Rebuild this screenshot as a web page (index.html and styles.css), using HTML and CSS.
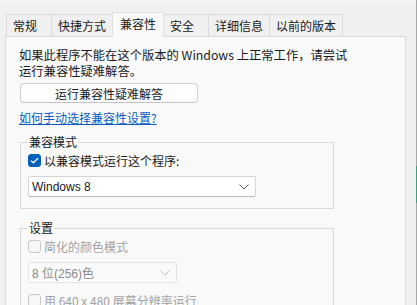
FILE: index.html
```html
<!DOCTYPE html>
<html lang="zh-CN">
  <head>
    <meta charset="UTF-8" />
    <title>属性 - 兼容性</title>
    <link rel="stylesheet" href="styles.css">
  </head>
  <body>
    <div class="window">
      <div class="tabs">
        <div class="tab">常规</div>
        <div class="tab">快捷方式</div>
        <div class="tab active">兼容性</div>
        <div class="tab">安全</div>
        <div class="tab">详细信息</div>
        <div class="tab">以前的版本</div>
      </div>
      <div class="panel">
        <p class="intro">如果此程序不能在这个版本的 Windows 上正常工作，请尝试<br>运行兼容性疑难解答。</p>
        <button class="btn">运行兼容性疑难解答</button>
        <a class="link" href="#">如何手动选择兼容性设置?</a>

        <fieldset class="group">
          <legend>兼容模式</legend>
          <label class="check">
            <span class="box checked">
              <svg width="9" height="7" viewBox="0 0 9 7"><path d="M1 3.6 L3.3 5.8 L8 1.2" fill="none" stroke="#fff" stroke-width="1.3"/></svg>
            </span>
            以兼容模式运行这个程序:
          </label>
          <div class="select">
            <span>Windows 8</span>
            <svg width="10" height="6" viewBox="0 0 10 6"><path d="M0.5 0.5 L5 5 L9.5 0.5" fill="none" stroke="#5c5c5c" stroke-width="1"/></svg>
          </div>
        </fieldset>

        <fieldset class="group settings">
          <legend>设置</legend>
          <label class="check disabled">
            <span class="box"></span>
            简化的颜色模式
          </label>
          <div class="select small disabled">
            <span>8 位(256)色</span>
            <svg width="10" height="6" viewBox="0 0 10 6"><path d="M0.5 0.5 L5 5 L9.5 0.5" fill="none" stroke="#c4c4c4" stroke-width="1"/></svg>
          </div>
          <label class="check disabled">
            <span class="box"></span>
            用 640 x 480 屏幕分辨率运行
          </label>
        </fieldset>
      </div>
    </div>
    <div class="edge">
      <div class="edge-mark"></div>
    </div>
  </body>
</html>
```
FILE: styles.css
```css
* {
  margin: 0;
  padding: 0;
  box-sizing: border-box;
}
html,
body {
  width: 417px;
  height: 305px;
  overflow: hidden;
}
body {
  display: flex;
  background-color: #f0f0f0;
  font-family: "Noto Sans CJK SC", "Liberation Sans", sans-serif;
  font-size: 12px;
  color: #1a1a1a;
}
.window {
  width: 416px;
  height: 305px;
  border-top: 3px solid #f4f4f4;
  padding: 0 10px 0 5px;
}
/* 右侧边缘 */
.edge {
  width: 1px;
  background-color: #a8a8a8;
}
.edge-mark {
  height: 37px;
  margin-top: 166px;
  background-color: #3aa27a;
}
/* 标签页 */
.tabs {
  display: flex;
  align-items: flex-end;
  height: 33px;
  padding-left: 1px;
}
.tab {
  min-width: 46px;
  height: 22px;
  padding: 0 6px;
  line-height: 21px;
  background-color: #f0f0f0;
  border: 1px solid #dadada;
  border-bottom: none;
  margin-right: -1px;
}
.tab.active {
  height: 25px;
  line-height: 22px;
  padding: 0 7px;
  background-color: #f9f9f9;
  border-color: #e0e0e0;
  position: relative;
  margin-bottom: -1px;
  z-index: 1;
}
/* 内容面板 */
.panel {
  height: 280px;
  background-color: #f9f9f9;
  border: 1px solid #dcdcdc;
  border-bottom: none;
  padding: 10px 0 0 13px;
}
.intro {
  line-height: 16px;
  font-size: 12.3px;
}
.btn {
  display: block;
  width: 178px;
  height: 20px;
  margin: 4px 0 0 1px;
  font-family: inherit;
  font-size: 12px;
  color: #1a1a1a;
  background-color: #fdfdfd;
  border: 1px solid #d0d0d0;
  border-bottom-color: #c2c2c2;
  border-radius: 4px;
}
.link {
  display: inline-block;
  margin-top: 7px;
  line-height: 16px;
  color: #0a5cc2;
  text-decoration: underline;
}
.group {
  width: 314px;
  margin: 8px 0 0 1px;
  padding: 0 0 11px 7px;
  border: 1px solid #d9d9d9;
}
.group legend {
  padding: 0 1px;
  line-height: 16px;
  color: #1a1a1a;
}
.settings {
  margin-top: 11px;
  height: 90px;
  border-bottom: none;
}
.check {
  display: flex;
  align-items: center;
  height: 16px;
  margin-top: 2px;
}
.box {
  display: flex;
  justify-content: center;
  align-items: center;
  width: 13px;
  height: 13px;
  margin-right: 3px;
  border: 1px solid #c8c8c8;
  border-radius: 3px;
  background-color: #f7f7f7;
}
.box.checked {
  background-color: #005fb8;
  border-color: #005fb8;
}
.check.disabled {
  color: #a3a3a3;
}
.select {
  display: flex;
  justify-content: space-between;
  align-items: center;
  width: 228px;
  height: 21px;
  margin-top: 8px;
  padding: 0 6px 0 3px;
  background-color: #ffffff;
  border: 1px solid #d4d4d4;
  border-bottom-color: #b8b8b8;
  border-radius: 2px;
  font-family: "Liberation Sans", "Noto Sans CJK SC", sans-serif;
}
.select.small {
  width: 149px;
  margin-bottom: 9px;
  background-color: #fafafa;
  border-color: #e4e4e4;
  color: #8a8a8a;
}
```
